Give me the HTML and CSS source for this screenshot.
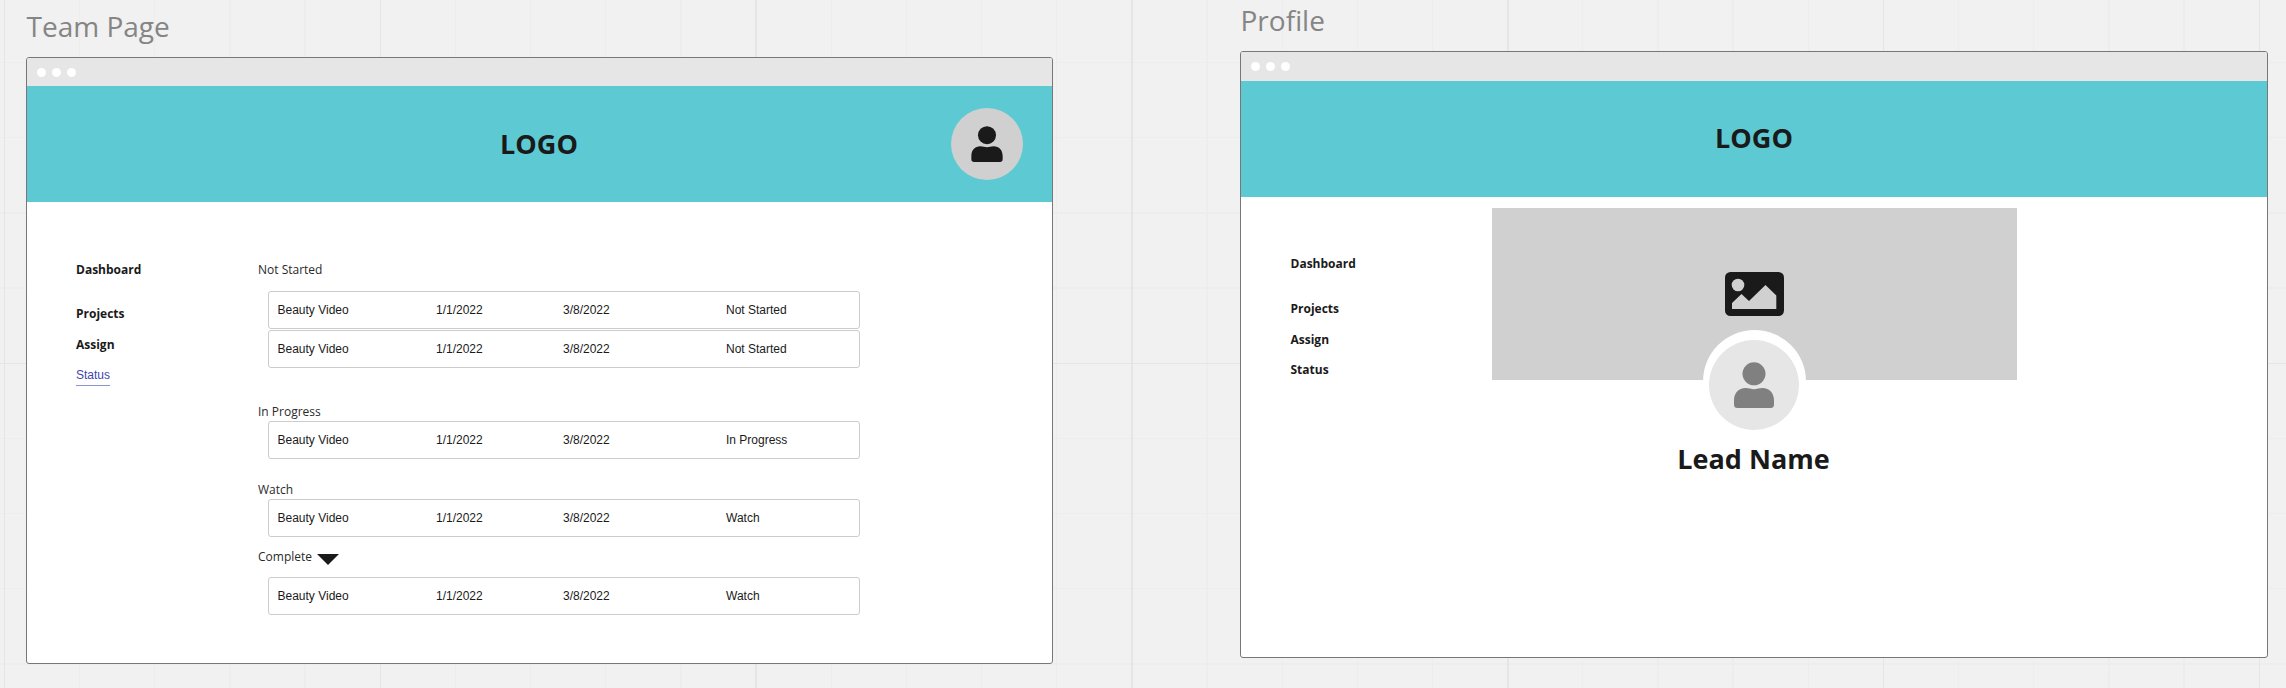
FILE: index.html
```html
<!DOCTYPE html>
<html lang="en">
<head>
<meta charset="utf-8">
<title>Wireframes</title>
<link rel="stylesheet" href="styles.css">
</head>
<body>
<svg class="symbols" width="0" height="0">
  <symbol id="user" viewBox="0 0 40 46">
    <circle cx="20" cy="11.8" r="11.5"/>
    <path d="M0 38.500C0 31 4.500 26 11.500 26C15 26 17 27.200 20 27.200C23 27.200 25 26 28.500 26C35.500 26 40 31 40 38.500V42.500Q40 46 36.500 46H3.500Q0 46 0 42.500Z"/>
  </symbol>
</svg>
<main class="canvas">
  <section class="board board-team">
    <h1 class="board-title">Team Page</h1>
    <div class="frame">
      <div class="titlebar"><i class="dot"></i><i class="dot"></i><i class="dot"></i></div>
      <header class="header">
        <span class="logo">LOGO</span>
        <span class="header-avatar"><svg class="header-user"><use href="#user"/></svg></span>
      </header>
      <div class="content">
        <nav class="nav">
          <a class="nav-item nav-first">Dashboard</a>
          <a class="nav-item">Projects</a>
          <a class="nav-item">Assign</a>
          <a class="nav-item nav-active">Status</a>
        </nav>
        <div class="groups">
          <section class="group group-todo">
            <h2 class="group-title">Not Started</h2>
            <div class="row"><span>Beauty Video</span><span>1/1/2022</span><span>3/8/2022</span><span>Not Started</span></div>
            <div class="row"><span>Beauty Video</span><span>1/1/2022</span><span>3/8/2022</span><span>Not Started</span></div>
          </section>
          <section class="group group-progress">
            <h2 class="group-title">In Progress</h2>
            <div class="row"><span>Beauty Video</span><span>1/1/2022</span><span>3/8/2022</span><span>In Progress</span></div>
          </section>
          <section class="group group-watch">
            <h2 class="group-title">Watch</h2>
            <div class="row"><span>Beauty Video</span><span>1/1/2022</span><span>3/8/2022</span><span>Watch</span></div>
          </section>
          <section class="group group-complete">
            <h2 class="group-title">Complete <svg class="caret" viewBox="0 0 22 11"><path d="M0 0H22L11 11Z"/></svg></h2>
            <div class="row"><span>Beauty Video</span><span>1/1/2022</span><span>3/8/2022</span><span>Watch</span></div>
          </section>
        </div>
      </div>
    </div>
  </section>
  <section class="board board-profile">
    <h1 class="board-title">Profile</h1>
    <div class="frame">
      <div class="titlebar"><i class="dot"></i><i class="dot"></i><i class="dot"></i></div>
      <header class="header"><span class="logo">LOGO</span></header>
      <div class="content">
        <nav class="nav">
          <a class="nav-item nav-first">Dashboard</a>
          <a class="nav-item">Projects</a>
          <a class="nav-item">Assign</a>
          <a class="nav-item">Status</a>
        </nav>
        <div class="profile">
          <div class="cover">
            <svg class="picture" viewBox="0 0 59 44">
              <rect width="59" height="44" rx="5.500" fill="#1a1a1a"/>
              <circle cx="13" cy="13" r="6.300" fill="#d0d0d0"/>
              <path d="M7 37V31L16.500 22L24 29L40.500 13L51.300 23.500V37Z" fill="#d0d0d0"/>
            </svg>
            <div class="ring"><div class="portrait"><svg class="portrait-user"><use href="#user"/></svg></div></div>
          </div>
          <h2 class="name">Lead Name</h2>
        </div>
      </div>
    </div>
  </section>
</main>
</body>
</html>
```

FILE: styles.css
```css
* { box-sizing: border-box; }
body {
  margin: 0;
  font-family: "Open Sans", "Noto Sans", sans-serif;
  color: #1a1a1a;
}
h1, h2 { margin: 0; font-weight: 400; }
.symbols { position: absolute; }
.canvas {
  display: flex;
  align-items: flex-start;
  gap: 187px;
  width: 2286px;
  height: 688px;
  padding-left: 26px;
  overflow: hidden;
  background-color: #f1f1f1;
  background-image:
    repeating-linear-gradient(90deg, #e5e5e5 0 1.6px, transparent 1.6px 375.8px),
    repeating-linear-gradient(180deg, #e5e5e5 0 1.6px, transparent 1.6px 375.8px),
    repeating-linear-gradient(90deg, #ededed 0 1.300px, transparent 1.300px 75.16px),
    repeating-linear-gradient(180deg, #ededed 0 1.300px, transparent 1.300px 75.16px);
  background-size: 3000px 1500px;
  background-position: -372px -389px;
}
.board { flex: none; }
.board-team { width: 1027px; padding-top: 7px; }
.board-profile { width: 1028px; padding-top: 1px; }
.board-title {
  height: 50px;
  padding-left: 0.5px;
  font-size: 28px;
  line-height: 38px;
  color: #858585;
}
.frame {
  height: 607px;
  border: 1px solid #777;
  border-radius: 3px;
  background: #fff;
  overflow: hidden;
}
.titlebar {
  display: flex;
  align-items: center;
  gap: 6px;
  height: 28px;
  padding-left: 10px;
  background: #e6e6e6;
}
.board-profile .titlebar { height: 29px; }
.dot { width: 9px; height: 9px; border-radius: 50%; background: #fff; }
.header {
  display: grid;
  grid-template-columns: 1fr auto 1fr;
  align-items: center;
  height: 116px;
  padding-right: 29px;
  padding-left: 28px;
  background: #5dcad3;
}
.board-profile .header { padding: 0 29px 2px; }
.logo { grid-column: 2; font-size: 27px; font-weight: 700; line-height: 40px; }
.header-avatar {
  display: flex;
  align-items: center;
  justify-content: center;
  justify-self: end;
  width: 72px;
  height: 72px;
  border-radius: 50%;
  background: #d0d0d0;
}
.header-user { width: 32px; height: 36px; fill: #1a1a1a; }
.content { display: flex; }
.nav {
  display: flex;
  flex-direction: column;
  align-items: flex-start;
  gap: 15px;
  width: 231px;
  padding: 60px 0 0 49px;
}
.nav-item { font-size: 12px; font-weight: 700; line-height: 16px; }
.nav-first { margin-bottom: 13px; }
.board-profile .nav { gap: 14.5px; padding-top: 59px; padding-left: 49.5px; }
.board-profile .nav-first { margin-bottom: 14.5px; }
.nav-active {
  height: 19px;
  margin-top: -1px;
  border-bottom: 1px solid #8e92d0;
  font-family: "Liberation Sans", Arial, sans-serif;
  font-weight: 400;
  color: #3f46ad;
}
.groups { width: 602px; padding-top: 60px; }
.group-title { display: flex; align-items: flex-start; height: 16px; font-size: 12px; line-height: 16px; color: #2a2a2a; }
.group-todo .group-title { margin-bottom: 13px; }
.group-progress { margin-top: 36px; }
.group-progress .group-title { margin-bottom: 1px; }
.group-watch { margin-top: 23px; }
.group-watch .group-title { margin-bottom: 1px; }
.group-complete { margin-top: 12px; }
.group-complete .group-title { margin-bottom: 12px; }
.caret { width: 22px; height: 11px; margin: 5px 0 0 5px; fill: #1a1a1a; }
.row {
  display: grid;
  grid-template-columns: 158.500px 127px 163px auto;
  align-items: center;
  height: 38px;
  margin-left: 10px;
  padding-left: 8.5px;
  border: 1px solid #ccc;
  border-radius: 3px;
  background: #fff;
  font-family: "Liberation Sans", Arial, sans-serif;
  font-size: 12px;
  line-height: 16px;
}
.row + .row { margin-top: 1px; }
.profile { width: 525px; margin-left: 20px; padding-top: 11px; }
.cover {
  display: flex;
  flex-direction: column;
  align-items: center;
  height: 172px;
  padding-top: 64px;
  padding-right: 1px;
  background: #d0d0d0;
}
.picture { flex: none; width: 59px; height: 44px; }
.ring {
  display: flex;
  flex: none;
  justify-content: center;
  width: 103px;
  height: 103px;
  margin-top: 14px;
  padding-top: 10px;
  border-radius: 50%;
  background: #fff;
}
.portrait {
  display: flex;
  justify-content: center;
  width: 90px;
  height: 90px;
  padding-top: 22px;
  border-radius: 50%;
  background: #e6e6e6;
}
.portrait-user { width: 40px; height: 46px; fill: #808080; }
.name { margin-top: 59px; padding-right: 2px; font-size: 27px; font-weight: 700; line-height: 40px; text-align: center; }
```
